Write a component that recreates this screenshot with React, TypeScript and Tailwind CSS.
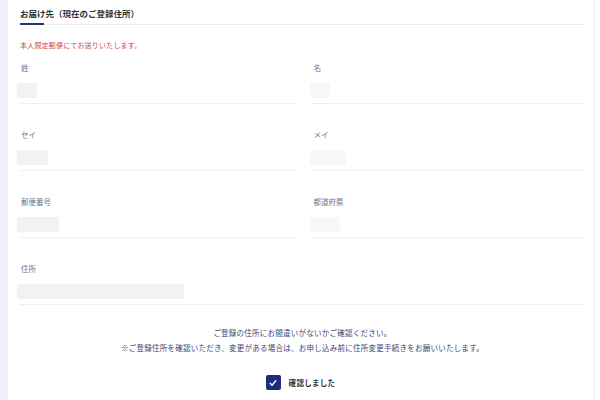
const jp = "font-['Noto_Sans_CJK_JP','Noto_Sans',sans-serif]";

type Field = { label: string; box: number; faint?: boolean };

const rows: Field[][] = [
  [{ label: "姓", box: 20 }, { label: "名", box: 20, faint: true }],
  [{ label: "セイ", box: 31 }, { label: "メイ", box: 36, faint: true }],
  [{ label: "郵便番号", box: 42 }, { label: "都道府県", box: 30, faint: true }],
];

const FieldBlock = ({ label, box, faint }: Field) => (
  <div className="flex flex-col">
    <div className="h-[10px] pl-[1px] text-[7.5px] leading-[10px] text-[#6f7391]">{label}</div>
    <div
      className={`mt-[10px] -ml-[3px] h-[15px] rounded-[1px] ${faint ? "bg-[#f8f8f9]" : "bg-[#f2f2f3]"}`}
      style={{ width: box }}
    />
    <div className="mt-[5px] h-px bg-[#efeff1]" />
  </div>
);

const App = () => {
  return (
    <div className={`flex h-[400px] w-[600px] overflow-hidden bg-white ${jp}`}>
      <div className="w-[8px] shrink-0 bg-[#f1f0fa]" />

      <div className="flex w-[586px] flex-col pl-[12px] pr-[9px]">
        <div className="pt-[8px]">
          <h2 className="text-[8.5px] font-bold leading-[10px] text-[#333333]">お届け先（現在のご登録住所）</h2>
          <div className="relative mt-[5px] h-[2px]">
            <div className="absolute left-0 right-[1px] top-[1px] h-px bg-[#ebebee]" />
            <div className="absolute left-0 top-0 h-[2px] w-[24px] bg-[#2a3472]" />
          </div>
        </div>

        <p className="mt-[15px] text-[7px] leading-[10px] tracking-[0.2px] text-[#d0463f]">
          本人限定郵便にてお送りいたします。
        </p>

        <div className="mt-[13px] flex flex-col gap-y-[26px]">
          {rows.map((r, i) => (
            <div key={i} className="grid grid-cols-2 gap-x-[16px]">
              <FieldBlock {...r[0]} />
              <div className="pl-[2px]">
                <FieldBlock {...r[1]} />
              </div>
            </div>
          ))}
          <FieldBlock label="住所" box={167} />
        </div>

        <div className="mt-[20px] text-center text-[7.5px] leading-[15px] tracking-[0.25px] text-[#3e4474]">
          <p>ご登録の住所にお間違いがないかご確認ください。</p>
          <p>※ご登録住所を確認いただき、変更がある場合は、お申し込み前に住所変更手続きをお願いいたします。</p>
        </div>

        <div className="mt-[20px] flex items-center justify-center gap-[8px] pr-[4px]">
          <span className="flex h-[15px] w-[15px] items-center justify-center rounded-[2px] bg-[#1f2c7b]">
            <svg viewBox="0 0 16 16" className="h-[10px] w-[10px]" fill="none" stroke="white" strokeWidth="2.2" strokeLinecap="round" strokeLinejoin="round">
              <path d="M3.5 8.5l3 3 6-7" />
            </svg>
          </span>
          <span className="text-[7.5px] font-bold leading-[10px] tracking-[0.3px] text-[#333333]">確認しました</span>
        </div>
      </div>

      <div className="w-px shrink-0 bg-[#ececef]" />
      <div className="flex-1 bg-white" />
    </div>
  );
};

export default App;
